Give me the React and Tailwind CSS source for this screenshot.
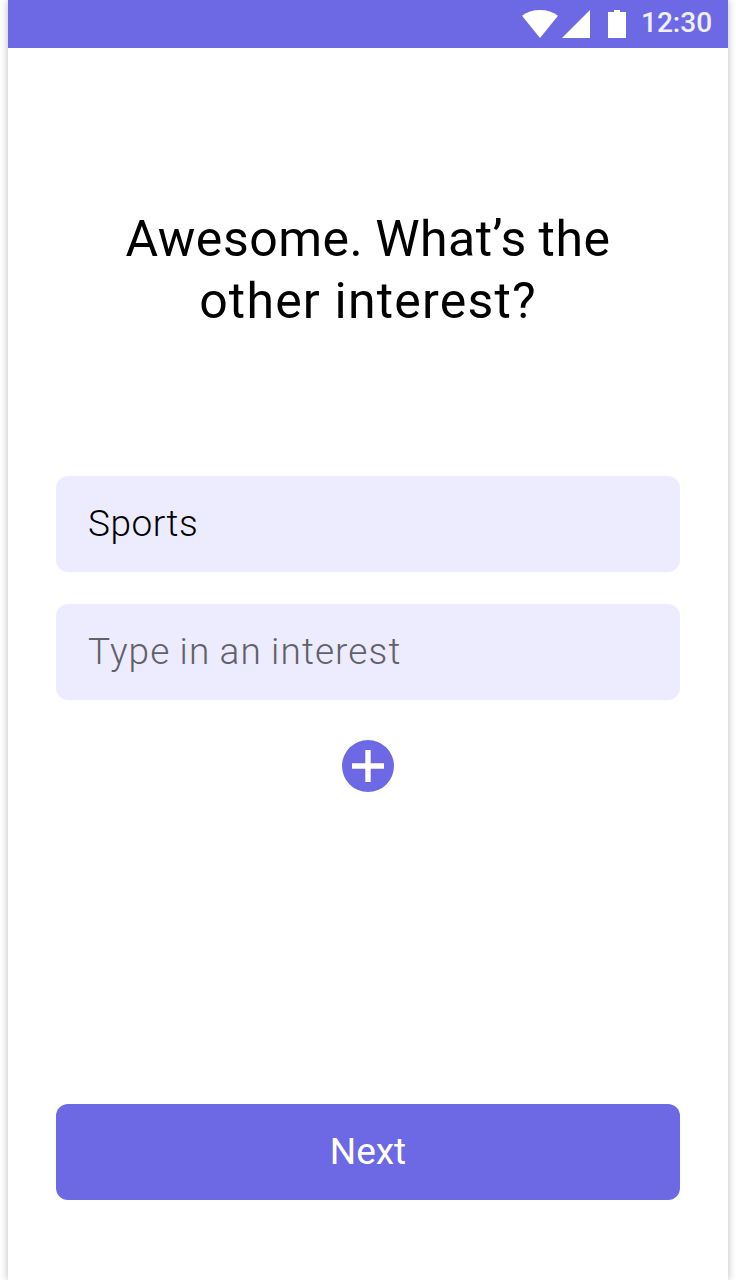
function StatusBar() {
  return (
    <header className="flex h-12 shrink-0 bg-[#6d69e5]">
      <svg className="ml-auto h-12 w-[112px] shrink-0" viewBox="0 0 112 48" fill="#fff" aria-hidden="true">
        <path d="M0 15.8C5 12 11 10 18 10s13 2 18 5.8L18 38Z" />
        <path d="M40 38 68 10V38Z" />
        <path d="M86 12h6v-2h6v2h6v26H86Z" />
      </svg>
      <span className="w-[94px] pl-[7px] font-['Roboto',sans-serif] text-[28px] leading-[45px] font-medium text-white/90">
        12:30
      </span>
    </header>
  );
}

export default function App() {
  return (
    <div className="h-[1280px] w-[736px] overflow-hidden bg-white px-2">
      <main className="flex h-full flex-col bg-white font-['Roboto',sans-serif] shadow-[0_0_8px_rgba(0,0,0,0.28)]">
        <StatusBar />
        <div className="flex grow flex-col px-12 pt-[160px] pb-20">
          <h1 className="flex h-[124px] flex-col items-center text-[50px] leading-[62px] font-normal whitespace-nowrap text-black">
            <span className="tracking-[0.5px] [word-spacing:-1px]">Awesome. What’s the</span>
            <span className="tracking-[1.2px]">other interest?</span>
          </h1>
          <div className="mt-24 flex flex-col gap-8 pt-12">
            <input
              defaultValue="Sports"
              aria-label="First interest"
              className="h-24 rounded-xl bg-[#edecff] px-8 pb-[1px] text-[37px] font-light tracking-[0.5px] text-black outline-none"
            />
            <input
              placeholder="Type in an interest"
              aria-label="Second interest"
              className="h-24 rounded-xl bg-[#edecff] px-8 pb-[1px] text-[37px] font-light tracking-[1.1px] outline-none [word-spacing:-1px] placeholder:text-[#616167]"
            />
          </div>
          <button aria-label="Add interest" className="mx-auto mt-10 size-[52px] rounded-full bg-[#6d69e5]">
            <svg viewBox="0 0 52 52" fill="none" stroke="#fff" strokeWidth="5.4" aria-hidden="true">
              <path d="M10 26h32M26 10v32" />
            </svg>
          </button>
          <button className="mt-auto h-24 rounded-xl bg-[#6d69e5] text-[37px] font-normal text-white">
            Next
          </button>
        </div>
      </main>
    </div>
  );
}
